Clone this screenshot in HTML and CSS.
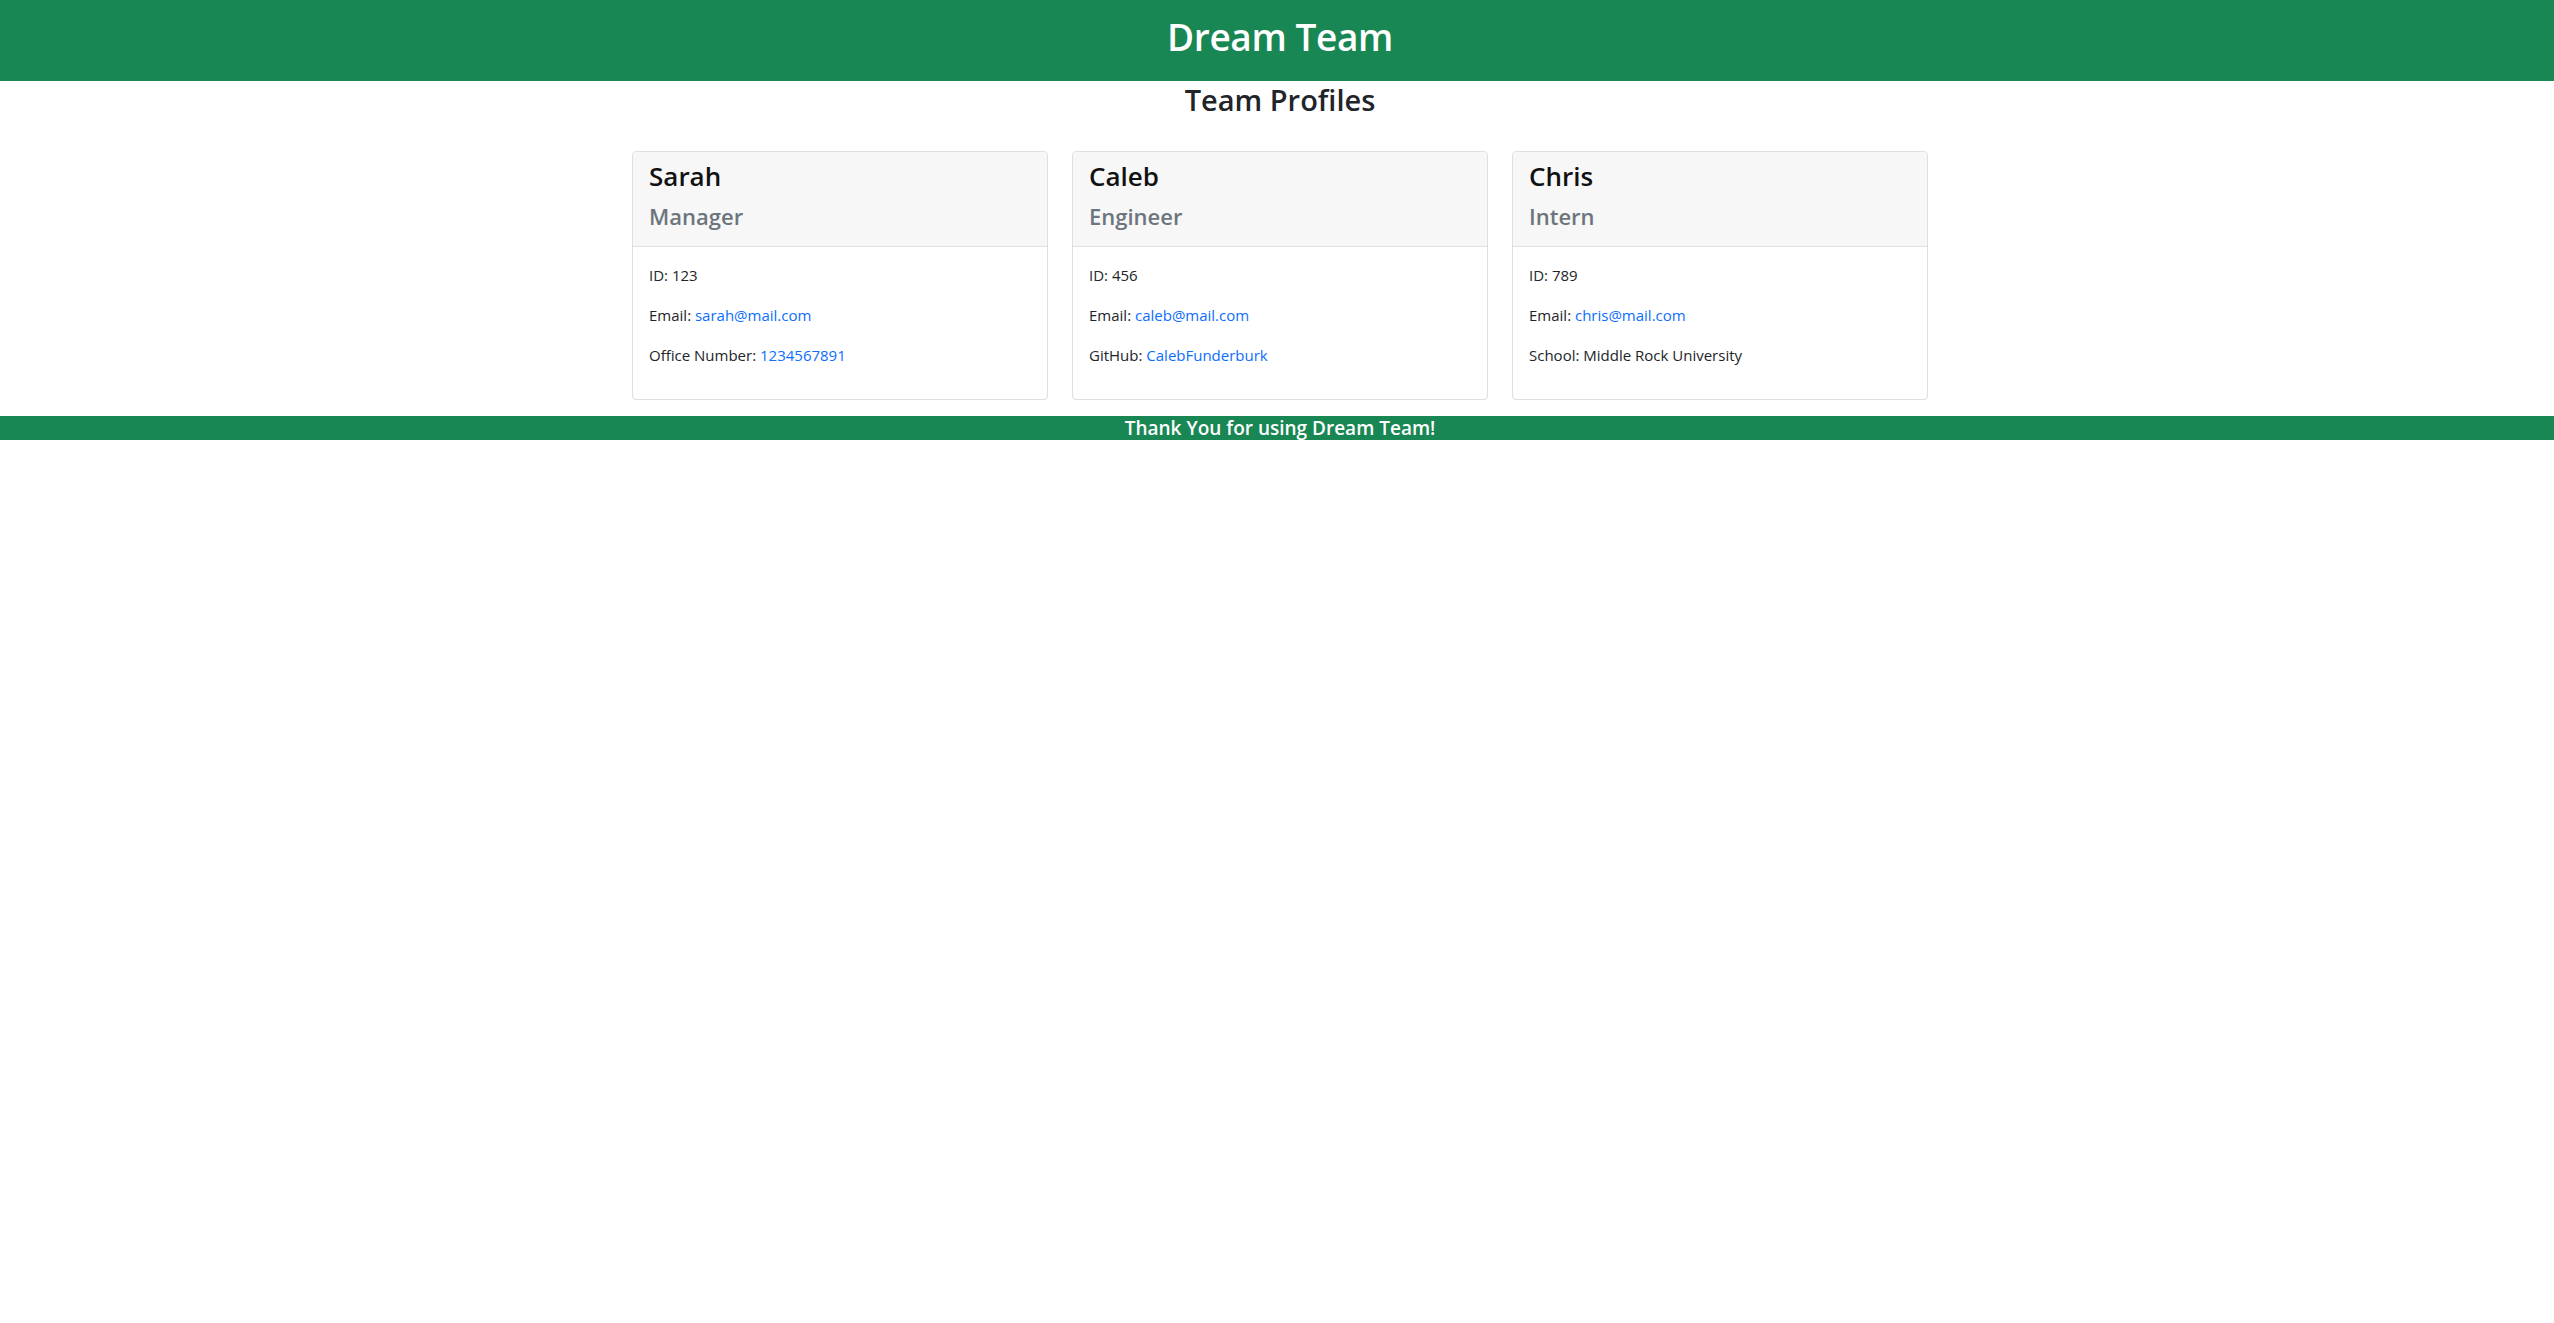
FILE: index.html
```html
<!DOCTYPE html>
<html lang="en">
<head>
<meta charset="utf-8">
<title>Dream Team</title>
<link rel="stylesheet" href="styles.css">
</head>
<body>
<div class="page">
  <header class="topbar">
    <h1 class="brand">Dream Team</h1>
  </header>
  <h2 class="page-title">Team Profiles</h2>
  <main class="cards">
    <section class="card">
      <div class="card-header">
        <h3 class="name">Sarah</h3>
        <h4 class="role">Manager</h4>
      </div>
      <div class="card-body">
        <p>ID: 123</p>
        <p>Email: <a href="#">sarah@mail.com</a></p>
        <p>Office Number: <a href="#">1234567891</a></p>
      </div>
    </section>
    <section class="card">
      <div class="card-header">
        <h3 class="name">Caleb</h3>
        <h4 class="role">Engineer</h4>
      </div>
      <div class="card-body">
        <p>ID: 456</p>
        <p>Email: <a href="#">caleb@mail.com</a></p>
        <p>GitHub: <a href="#">CalebFunderburk</a></p>
      </div>
    </section>
    <section class="card">
      <div class="card-header">
        <h3 class="name">Chris</h3>
        <h4 class="role">Intern</h4>
      </div>
      <div class="card-body">
        <p>ID: 789</p>
        <p>Email: <a href="#">chris@mail.com</a></p>
        <p>School: Middle Rock University</p>
      </div>
    </section>
  </main>
  <footer class="footbar">Thank You for using Dream Team!</footer>
</div>
</body>
</html>
```
FILE: styles.css
```css
*, *::before, *::after {
  box-sizing: border-box;
}
html {
  overflow-x: hidden;
}
body {
  margin: 0;
  font-family: "Open Sans", "Noto Sans", sans-serif;
  color: #212529;
  background: #fff;
}
.page {
  width: 2560px;
}
.topbar {
  background: #198754;
  height: 81px;
  display: flex;
  justify-content: center;
  align-items: flex-start;
}
.brand {
  margin: 13px 0 0;
  font-size: 37px;
  line-height: 48px;
  font-weight: 600;
  letter-spacing: -0.4px;
  color: #fff;
}
.page-title {
  margin: 0;
  text-align: center;
  font-size: 29px;
  line-height: 38px;
  font-weight: 600;
  color: #212529;
}
.cards {
  display: flex;
  justify-content: center;
  gap: 24px;
  margin-top: 32px;
}
.card {
  width: 416px;
  border: 1px solid #dfdfdf;
  border-radius: 4px;
  margin-bottom: 16px;
  overflow: hidden;
}
.card-header {
  background: #f7f7f7;
  border-bottom: 1px solid #dfdfdf;
  padding: 8px 16px;
}
.name {
  margin: 0 0 8px;
  font-size: 26px;
  line-height: 33.6px;
  font-weight: 600;
  color: #111;
}
.role {
  margin: 0;
  font-size: 22px;
  line-height: 28.8px;
  font-weight: 600;
  color: #6c757d;
  padding-bottom: 8px;
}
.card-body {
  padding: 16px;
}
.card-body p {
  margin: 0 0 16px;
  font-size: 15px;
  line-height: 24px;
}
.card-body a {
  color: #0d6efd;
  text-decoration: none;
}
.footbar {
  background: #198754;
  color: #fff;
  text-align: center;
  font-size: 19px;
  line-height: 24px;
  font-weight: 600;
}
```
